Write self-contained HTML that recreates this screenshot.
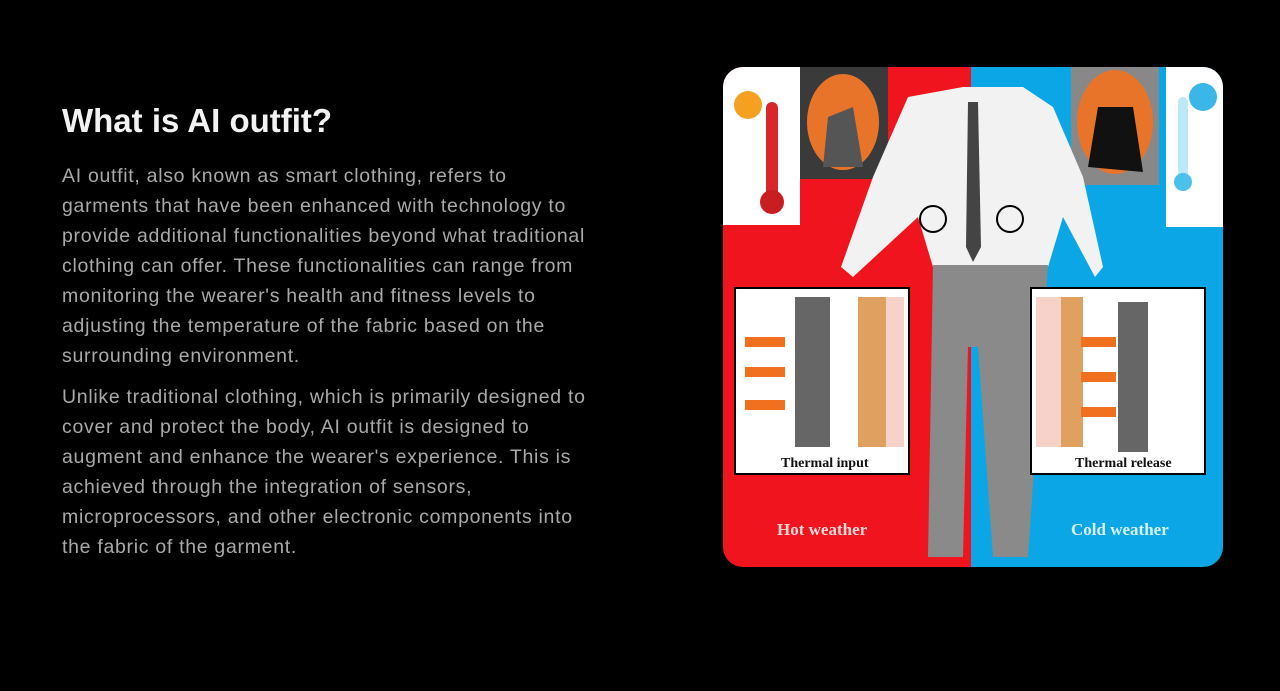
<!DOCTYPE html>
<html><head><meta charset="utf-8"><style>
body{margin:0;width:1280px;height:691px;background:#000;overflow:hidden;font-family:"Liberation Sans",sans-serif;position:relative}
h1{position:absolute;left:62px;top:102px;margin:0;font-size:33px;font-weight:bold;color:#f2f2f2;letter-spacing:0px}
.p{position:absolute;left:62px;color:#a9a9a9;font-size:19.5px;letter-spacing:0.7px;line-height:30px;white-space:nowrap}
.img{position:absolute;left:723px;top:67px;width:500px;height:500px;border-radius:20px;overflow:hidden}
</style></head><body>
<h1>What is AI outfit?</h1>
<div class="p" style="top:161px">AI outfit, also known as smart clothing, refers to<br>garments that have been enhanced with technology to<br>provide additional functionalities beyond what traditional<br>clothing can offer. These functionalities can range from<br>monitoring the wearer's health and fitness levels to<br>adjusting the temperature of the fabric based on the<br>surrounding environment.</div>
<div class="p" style="top:382px">Unlike traditional clothing, which is primarily designed to<br>cover and protect the body, AI outfit is designed to<br>augment and enhance the wearer's experience. This is<br>achieved through the integration of sensors,<br>microprocessors, and other electronic components into<br>the fabric of the garment.</div>
<div class="img"><svg width="500" height="500" viewBox="0 0 500 500">
<rect width="248" height="500" fill="#f0141e"/><rect x="248" width="252" height="500" fill="#0aa6e6"/>
<rect width="77" height="158" fill="#fff"/><rect x="77" width="88" height="112" fill="#3a3a3a"/>
<ellipse cx="120" cy="55" rx="36" ry="48" fill="#e8742a"/><path d="M100 100 L105 50 L130 40 L140 100Z" fill="#555"/>
<circle cx="25" cy="38" r="14" fill="#f5a020"/><rect x="43" y="35" width="12" height="110" rx="6" fill="#d8262a"/><circle cx="49" cy="135" r="12" fill="#c81e22"/>
<rect x="348" width="88" height="118" fill="#888"/><ellipse cx="392" cy="55" rx="38" ry="52" fill="#e8742a"/><path d="M365 100 L375 40 L410 40 L420 105Z" fill="#111"/>
<rect x="443" width="57" height="160" fill="#fff"/><rect x="455" y="30" width="10" height="90" rx="5" fill="#bde8f5"/><circle cx="460" cy="115" r="9" fill="#4ac0ea"/><circle cx="480" cy="30" r="14" fill="#3ab6e8"/>
<path d="M185 30 L240 20 L300 20 L330 40 L360 110 L380 200 L372 210 L340 150 L325 200 L210 200 L195 150 L130 210 L118 200 L150 110Z" fill="#f2f2f2"/>
<path d="M245 35 L255 35 L258 180 L250 195 L243 180Z" fill="#444"/>
<path d="M210 198 L325 198 L305 490 L270 490 L255 280 L245 280 L240 490 L205 490Z" fill="#8a8a8a"/>
<circle cx="210" cy="152" r="13" fill="none" stroke="#000" stroke-width="2"/><circle cx="287" cy="152" r="13" fill="none" stroke="#000" stroke-width="2"/>
<rect x="12" y="221" width="174" height="186" fill="#fff" stroke="#000" stroke-width="2"/>
<rect x="72" y="230" width="35" height="150" fill="#666"/><rect x="135" y="230" width="28" height="150" fill="#e0a060"/><rect x="163" y="230" width="18" height="150" fill="#f6d2c8"/>
<path d="M22 275 h40 M22 305 h40 M22 338 h40" stroke="#f07020" stroke-width="10"/>
<rect x="308" y="221" width="174" height="186" fill="#fff" stroke="#000" stroke-width="2"/>
<rect x="313" y="230" width="25" height="150" fill="#f6d2c8"/><rect x="338" y="230" width="22" height="150" fill="#e0a060"/><rect x="395" y="235" width="30" height="150" fill="#666"/>
<path d="M358 275 h35 M358 310 h35 M358 345 h35" stroke="#f07020" stroke-width="10"/>
<g font-family="Liberation Serif,serif" font-weight="bold"><text x="58" y="400" font-size="14" fill="#111">Thermal input</text>
<text x="352" y="400" font-size="14" fill="#111">Thermal release</text>
<text x="54" y="468" font-size="17" fill="#f6d8d8">Hot weather</text>
<text x="348" y="468" font-size="17" fill="#d8f2ff">Cold weather</text></g>
</svg></div>
</body></html>
